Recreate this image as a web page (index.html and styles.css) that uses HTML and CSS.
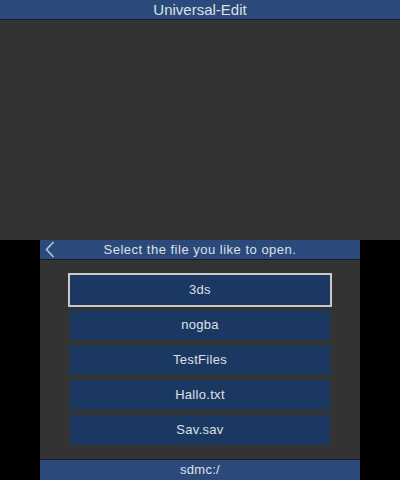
FILE: index.html
```html
<!DOCTYPE html>
<html>
<head>
<meta charset="utf-8">
<link rel="stylesheet" href="styles.css">
</head>
<body>
<div class="top-screen">
  <div class="bar top-bar">Universal-Edit</div>
</div>
<div class="bottom-screen">
  <div class="bar sub-bar">
    <svg class="back" width="12" height="17" viewBox="0 0 12 17"><path d="M9.5 1 L2.5 8.5 L9.5 16" fill="none" stroke="#b9c6da" stroke-width="1.6"/></svg>
    <span>Select the file you like to open.</span>
  </div>
  <div class="list">
    <div class="item selected">3ds</div>
    <div class="item">nogba</div>
    <div class="item">TestFiles</div>
    <div class="item">Hallo.txt</div>
    <div class="item">Sav.sav</div>
  </div>
  <div class="bar foot-bar">sdmc:/</div>
</div>
</body>
</html>
```
FILE: styles.css
```css
html, body {
  margin: 0;
  padding: 0;
  background: #000;
  width: 400px;
  height: 480px;
  overflow: hidden;
  font-family: "Liberation Sans", Arial, sans-serif;
  color: #dde0e6;
}
.top-screen {
  width: 400px;
  height: 240px;
  background: #333333;
}
.bar {
  background: #2b4a7b;
  height: 19px;
  line-height: 19px;
  text-align: center;
  box-sizing: content-box;
}
.top-bar {
  border-bottom: 1px solid #151d2c;
  font-size: 15px;
}
.bottom-screen {
  width: 320px;
  height: 240px;
  margin: 0 auto;
  background: #333333;
  display: flex;
  flex-direction: column;
}
.sub-bar {
  position: relative;
  border-bottom: 1px solid #151d2c;
  font-size: 13px;
  letter-spacing: 0.5px;
}
.back {
  position: absolute;
  left: 4px;
  top: 1px;
}
.list {
  flex: 1;
  display: flex;
  flex-direction: column;
  align-items: center;
  gap: 5px;
  padding-top: 15px;
}
.item {
  width: 260px;
  height: 30px;
  line-height: 30px;
  background: #1b3862;
  text-align: center;
  font-size: 13px;
  letter-spacing: 0.3px;
}
.item.selected {
  outline: 2px solid #c9c9c9;
}
.foot-bar {
  border-top: 1px solid #151d2c;
  height: 20px;
  line-height: 20px;
  font-size: 13px;
  letter-spacing: 0.3px;
}
```
